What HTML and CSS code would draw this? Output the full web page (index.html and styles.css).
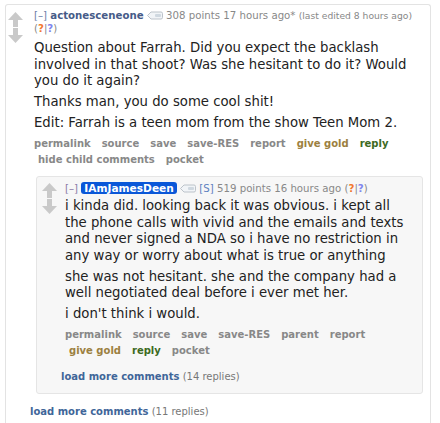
FILE: index.html
```html
<!DOCTYPE html>
<html lang="en">
<head>
    <meta charset="UTF-8">
    <title>Comments</title>
    <link rel="stylesheet" href="styles.css">
</head>
<body>

    <div class="comment">
        <div class="entry-row">
            <div class="midcol">
                <svg class="arrow" viewBox="0 0 15 15"><path d="M7.5 0 L15 8 H10 V15 H5 V8 H0 Z"/></svg>
                <svg class="arrow" viewBox="0 0 15 15"><path d="M5 0 H10 V7 H15 L7.5 15 L0 7 H5 Z"/></svg>
            </div>
            <div class="entry">
                <p class="tagline">
                    <a href="#" class="expand">[&ndash;]</a>
                    <a href="#" class="author">actonesceneone</a>
                    <span class="usertag"><svg viewBox="0 0 16 9"><path d="M0.5 4.5 L4 1 H14 Q15.5 1 15.5 2.5 V6.5 Q15.5 8 14 8 H4 Z"/><rect x="8" y="3" width="6" height="3" rx="1"/></svg></span>
                    <span class="score">308 points</span> 17 hours ago*
                    <span class="edited">(last edited 8 hours ago)</span>
                    <span class="votes">(<span class="up">?</span>|<span class="down">?</span>)</span>
                </p>
                <div class="md">
                    <p>Question about Farrah. Did you expect the backlash involved in that shoot? Was she hesitant to do it? Would you do it again?</p>
                    <p>Thanks man, you do some cool shit!</p>
                    <p>Edit: Farrah is a teen mom from the show Teen Mom 2.</p>
                </div>
                <ul class="buttons">
                    <li class="first"><a href="#">permalink</a></li>
                    <li><a href="#">source</a></li>
                    <li><a href="#">save</a></li>
                    <li><a href="#">save-RES</a></li>
                    <li><a href="#">report</a></li>
                    <li><a href="#" class="gold">give gold</a></li>
                    <li><a href="#" class="reply">reply</a></li>
                    <li><a href="#">hide child comments</a></li>
                    <li><a href="#">pocket</a></li>
                </ul>
            </div>
        </div>

        <div class="child">
            <div class="comment">
                <div class="entry-row">
                    <div class="midcol">
                        <svg class="arrow" viewBox="0 0 15 15"><path d="M7.5 0 L15 8 H10 V15 H5 V8 H0 Z"/></svg>
                        <svg class="arrow" viewBox="0 0 15 15"><path d="M5 0 H10 V7 H15 L7.5 15 L0 7 H5 Z"/></svg>
                    </div>
                    <div class="entry">
                        <p class="tagline">
                            <a href="#" class="expand visited">[&ndash;]</a>
                            <a href="#" class="author submitter">IAmJamesDeen</a>
                            <span class="usertag"><svg viewBox="0 0 16 9"><path d="M0.5 4.5 L4 1 H14 Q15.5 1 15.5 2.5 V6.5 Q15.5 8 14 8 H4 Z"/><rect x="8" y="3" width="6" height="3" rx="1"/></svg></span>
                            <a href="#" class="op">[S]</a>
                            <span class="score">519 points</span> 16 hours ago
                            <span class="votes">(<span class="up">?</span>|<span class="down">?</span>)</span>
                        </p>
                        <div class="md">
                            <p>i kinda did. looking back it was obvious. i kept all the phone calls with vivid and the emails and texts and never signed a NDA so i have no restriction in any way or worry about what is true or anything</p>
                            <p>she was not hesitant. she and the company had a well negotiated deal before i ever met her.</p>
                            <p>i don't think i would.</p>
                        </div>
                        <ul class="buttons">
                            <li class="first"><a href="#">permalink</a></li>
                            <li><a href="#">source</a></li>
                            <li><a href="#">save</a></li>
                            <li><a href="#">save-RES</a></li>
                            <li><a href="#">parent</a></li>
                            <li><a href="#">report</a></li>
                            <li><a href="#" class="gold">give gold</a></li>
                            <li><a href="#" class="reply">reply</a></li>
                            <li><a href="#">pocket</a></li>
                        </ul>
                    </div>
                </div>
                <div class="child">
                    <p class="morechildren"><a href="#">load more comments</a> <span>(14 replies)</span></p>
                </div>
            </div>
            <p class="morechildren"><a href="#">load more comments</a> <span>(11 replies)</span></p>
        </div>
    </div>

</body>
</html>
```

FILE: styles.css
```css
* {
    margin: 0;
    padding: 0;
    box-sizing: border-box;
}

body {
    font-family: "DejaVu Sans", Verdana, sans-serif;
    background: #fff;
    color: #222;
}

a {
    text-decoration: none;
}

.comment {
    margin: 4px 9px 0 5px;
    padding: 4px 0 20px;
    border: 1px solid #e3e3e3;
    border-bottom: none;
    border-radius: 3px 3px 0 0;
}

.entry-row {
    display: flex;
}

.midcol {
    flex: none;
    width: 15px;
    margin: 3px 11px 0 2px;
}

.arrow {
    display: block;
    width: 15px;
    height: 15px;
    fill: #c9c9c9;
}

.arrow + .arrow {
    margin-top: 1px;
}

.entry {
    flex: 1;
    min-width: 0;
    padding-right: 8px;
}

/* tagline */
.tagline {
    font-size: 10.2px;
    line-height: 13px;
    color: #888;
}

.tagline .expand {
    color: #6b7ea9;
}

.tagline .expand.visited {
    color: #8a7ba8;
}

.tagline .author {
    color: #465b88;
    font-weight: bold;
}

.tagline .author.submitter {
    color: #fff;
    background: #0a57d8;
    border-radius: 3px;
    padding: 0 3px;
    font-size: 10.6px;
}

.tagline .op {
    color: #5d80bf;
}

.usertag svg {
    width: 16px;
    height: 9px;
    vertical-align: -1px;
}

.usertag path {
    fill: #f1f4f7;
    stroke: #bcc3ca;
    stroke-width: 1;
}

.usertag rect {
    fill: #cfd8e0;
}

.tagline .edited {
    font-size: 9.2px;
}

.votes {
    white-space: nowrap;
}

.votes .up {
    color: #f2782f;
    font-weight: bold;
}

.votes .down {
    color: #7f86ee;
    font-weight: bold;
}

/* comment body */
.md {
    margin-top: 5px;
    font-size: 13.25px;
    line-height: 16.5px;
    color: #222;
}

.md p {
    margin-bottom: 4.5px;
}

/* buttons */
.buttons {
    list-style: none;
    display: flex;
    flex-wrap: wrap;
    font-size: 10px;
    line-height: 16px;
    font-weight: bold;
}

.buttons li {
    padding: 0 7px 0 4px;
    white-space: nowrap;
}

.buttons li.first {
    padding-left: 0;
}

.buttons a {
    color: #888;
}

.buttons a.gold {
    color: #9c8040;
}

.buttons a.reply {
    color: #3d6a1f;
}

/* children */
.child .comment {
    margin: 8px 7px 0 30px;
    padding: 5px 0 10px;
    background: #f7f7f7;
    border: 1px solid #e5e5e5;
    border-radius: 3px;
}

.child .comment .midcol {
    margin: 1px 8px 0 5px;
}

.child .comment .entry {
    padding-right: 12px;
}

.child .comment .md {
    margin-top: 3px;
}

.morechildren {
    margin: 11px 0 0 24px;
    font-size: 10px;
    line-height: 13px;
    color: #777;
}

.morechildren a {
    color: #3f6699;
    font-weight: bold;
}
```
